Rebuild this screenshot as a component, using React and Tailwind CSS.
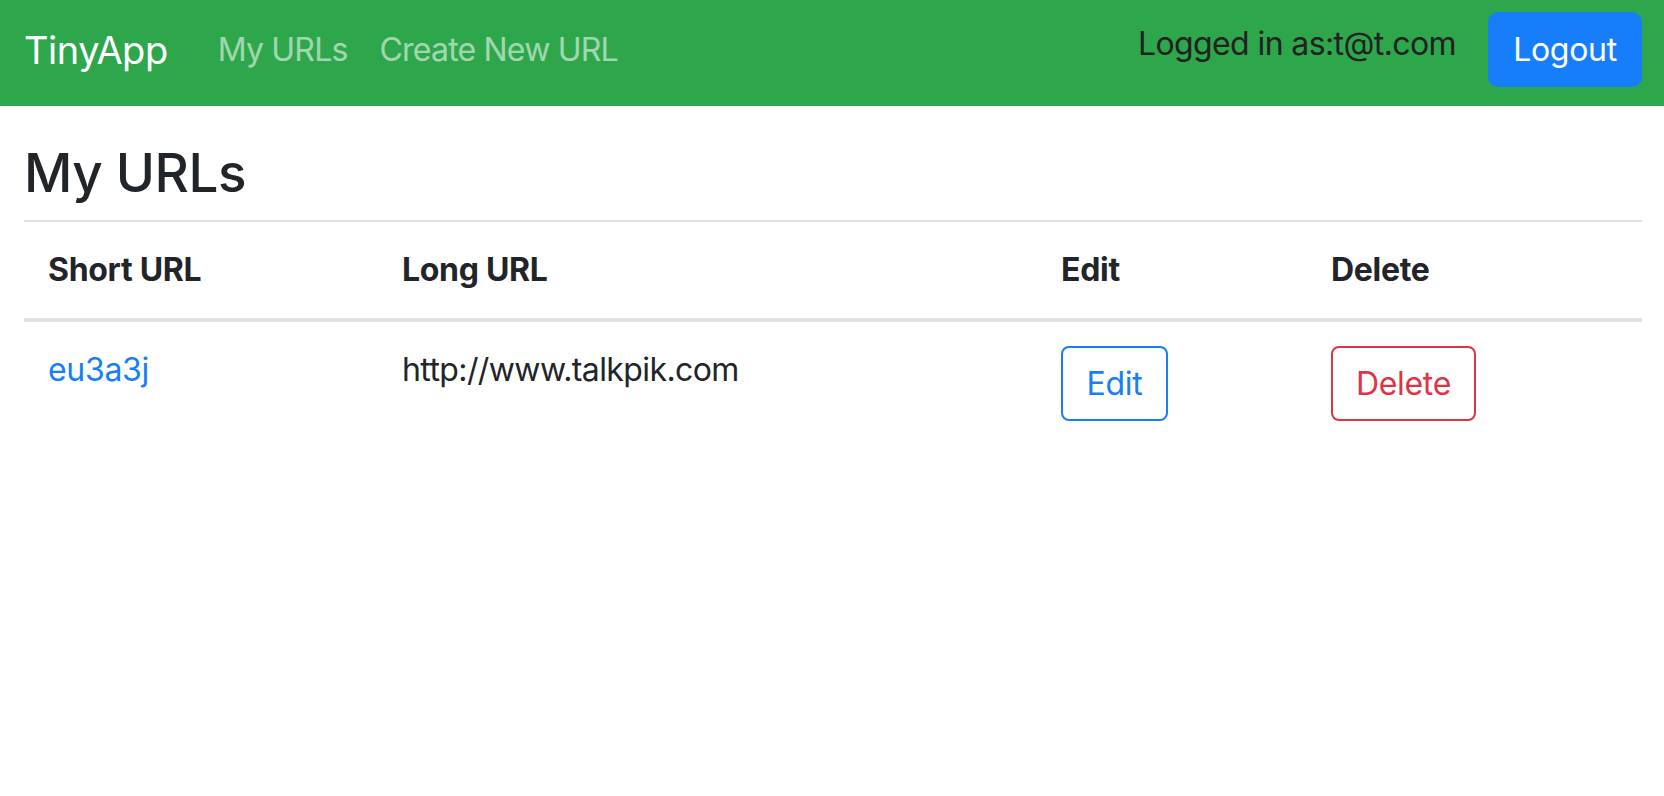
import React from "react";

const urls = [{ short: "eu3a3j", long: "http://www.talkpik.com" }];

export default function App() {
	return (
		<div
			className="min-h-screen bg-white text-[#212529]"
			style={{ fontFamily: "Inter, 'Noto Sans', sans-serif" }}
		>
			<nav className="h-[106px] bg-[#2ea64b] flex items-start pl-6 pr-[22px] pt-3">
				<a className="text-white text-[38px] leading-[76px] mr-[50px] tracking-[-0.5px]">
					TinyApp
				</a>
				<div className="flex gap-8 text-[32px] leading-[76px] text-white/55 tracking-[-0.8px]">
					<a>My URLs</a>
					<a>Create New URL</a>
				</div>
				<div className="ml-auto flex items-start">
					<span className="text-[32px] leading-[64px] text-[#222] mr-8 tracking-[-0.6px]">
						Logged in as:t@t.com
					</span>
					<button className="h-[75px] w-[154px] rounded-[10px] bg-[#167efb] text-white text-[32px] tracking-[-0.3px]">
						Logout
					</button>
				</div>
			</nav>

			<main className="pl-6 pr-[22px]">
				<h1 className="text-[53px] leading-[70px] font-medium mt-8 mb-3 tracking-[-0.5px]">
					My URLs
				</h1>
				<table className="w-full table-fixed border-collapse text-[32px] leading-[48px]">
					<colgroup>
						<col className="w-[354px]" />
						<col className="w-[659px]" />
						<col className="w-[270px]" />
						<col />
					</colgroup>
					<thead>
						<tr className="border-t-2 border-b-4 border-[#dee2e6]">
							<th className="p-6 text-left font-bold tracking-[-0.3px]">Short URL</th>
							<th className="p-6 text-left font-bold tracking-[-0.3px]">Long URL</th>
							<th className="p-6 text-left font-bold tracking-[-0.3px]">Edit</th>
							<th className="p-6 text-left font-bold tracking-[-0.3px]">Delete</th>
						</tr>
					</thead>
					<tbody>
						{urls.map((u) => (
							<tr key={u.short}>
								<td className="p-6 align-top">
									<a className="text-[#167efb] tracking-[-0.3px]">{u.short}</a>
								</td>
								<td className="p-6 align-top tracking-[-0.6px]">{u.long}</td>
								<td className="p-6 align-top">
									<button className="h-[75px] w-[107px] border-2 border-[#167efb] rounded-[8px] text-[#167efb] tracking-[-0.3px]">
										Edit
									</button>
								</td>
								<td className="p-6 align-top">
									<button className="h-[75px] w-[145px] border-2 border-[#dc3545] rounded-[8px] text-[#dc3545] tracking-[-0.3px]">
										Delete
									</button>
								</td>
							</tr>
						))}
					</tbody>
				</table>
			</main>
		</div>
	);
}
